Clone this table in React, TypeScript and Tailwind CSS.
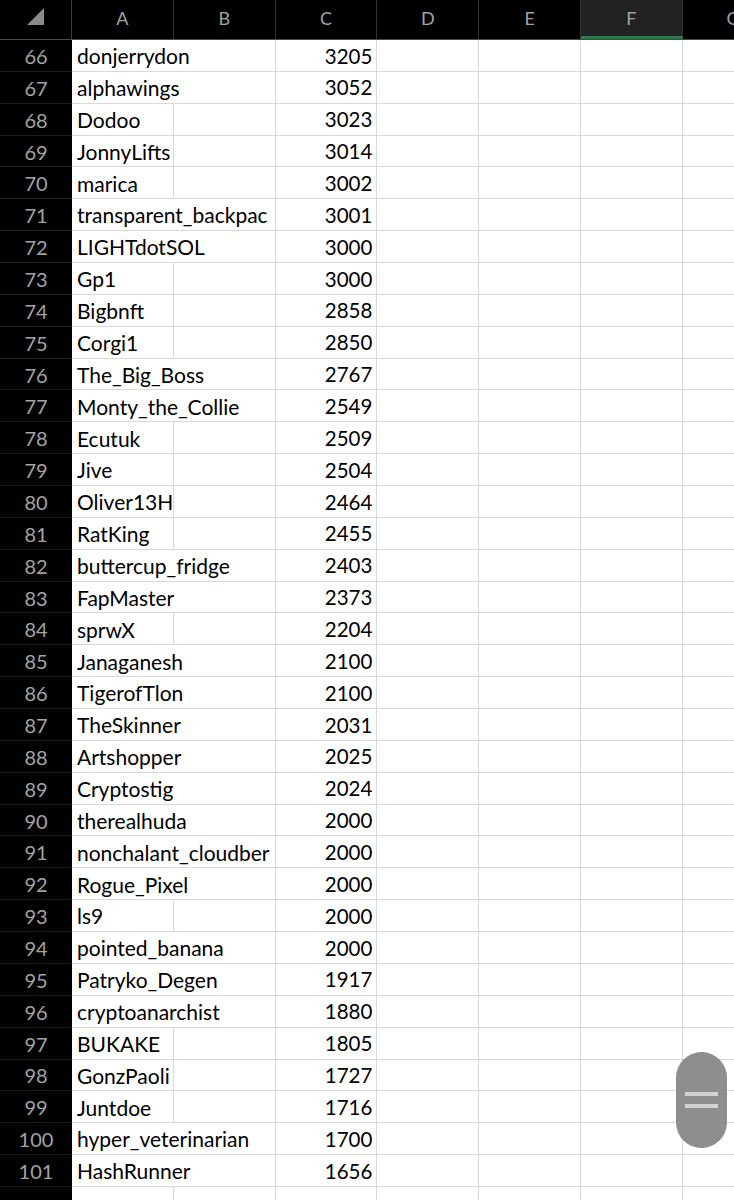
import React from "react";

type Row = { n: number; name: string; v: string; o: boolean };

const rows: Row[] = [
  { n: 66, name: "donjerrydon", v: "3205", o: true },
  { n: 67, name: "alphawings", v: "3052", o: true },
  { n: 68, name: "Dodoo", v: "3023", o: false },
  { n: 69, name: "JonnyLifts", v: "3014", o: false },
  { n: 70, name: "marica", v: "3002", o: false },
  { n: 71, name: "transparent_backpac", v: "3001", o: true },
  { n: 72, name: "LIGHTdotSOL", v: "3000", o: true },
  { n: 73, name: "Gp1", v: "3000", o: false },
  { n: 74, name: "Bigbnft", v: "2858", o: false },
  { n: 75, name: "Corgi1", v: "2850", o: false },
  { n: 76, name: "The_Big_Boss", v: "2767", o: true },
  { n: 77, name: "Monty_the_Collie", v: "2549", o: true },
  { n: 78, name: "Ecutuk", v: "2509", o: false },
  { n: 79, name: "Jive", v: "2504", o: false },
  { n: 80, name: "Oliver13H", v: "2464", o: false },
  { n: 81, name: "RatKing", v: "2455", o: false },
  { n: 82, name: "buttercup_fridge", v: "2403", o: true },
  { n: 83, name: "FapMaster", v: "2373", o: true },
  { n: 84, name: "sprwX", v: "2204", o: false },
  { n: 85, name: "Janaganesh", v: "2100", o: true },
  { n: 86, name: "TigerofTlon", v: "2100", o: true },
  { n: 87, name: "TheSkinner", v: "2031", o: true },
  { n: 88, name: "Artshopper", v: "2025", o: true },
  { n: 89, name: "Cryptostig", v: "2024", o: true },
  { n: 90, name: "therealhuda", v: "2000", o: true },
  { n: 91, name: "nonchalant_cloudber", v: "2000", o: true },
  { n: 92, name: "Rogue_Pixel", v: "2000", o: true },
  { n: 93, name: "ls9", v: "2000", o: false },
  { n: 94, name: "pointed_banana", v: "2000", o: true },
  { n: 95, name: "Patryko_Degen", v: "1917", o: true },
  { n: 96, name: "cryptoanarchist", v: "1880", o: true },
  { n: 97, name: "BUKAKE", v: "1805", o: false },
  { n: 98, name: "GonzPaoli", v: "1727", o: false },
  { n: 99, name: "Juntdoe", v: "1716", o: false },
  { n: 100, name: "hyper_veterinarian", v: "1700", o: true },
  { n: 101, name: "HashRunner", v: "1656", o: true },
];

const cols = ["A", "B", "C", "D", "E", "F", "G"];

function EmptyCell() {
  return <div className="w-[101.8px] shrink-0 h-full border-r border-b border-[#d9d9d9] bg-white" />;
}

function DataRow({ r }: { r?: Row }) {
  return (
    <div className="flex h-[31.86px] shrink-0">
      <div className="w-[72px] shrink-0 h-full bg-black border-b border-[#1c1c1c] flex items-center justify-center text-[20px] text-[#a3a3a3] pt-[1px]">
        {r ? r.n : ""}
      </div>
      <div className="w-[203.6px] shrink-0 h-full flex overflow-hidden border-r border-b border-[#d9d9d9] bg-white">
        <div
          className={
            "w-[101.8px] shrink-0 h-full flex items-center pl-[5px] pt-[1px] whitespace-nowrap text-[21px] text-black " +
            (r && r.o ? "" : "border-r border-[#d9d9d9]")
          }
        >
          {r ? r.name : ""}
        </div>
        <div className="w-[101.8px] shrink-0 h-full" />
      </div>
      <div className="w-[101.8px] shrink-0 h-full flex items-center justify-end pr-[4px] pt-[1px] text-[20.5px] text-black border-r border-b border-[#d9d9d9] bg-white">
        {r ? r.v : ""}
      </div>
      <EmptyCell />
      <EmptyCell />
      <EmptyCell />
      <EmptyCell />
    </div>
  );
}

export default function App() {
  return (
    <div className="relative w-[734px] h-[1200px] overflow-hidden bg-black font-['Lato',sans-serif]">
      <div className="flex flex-col w-[900px]">
        <div className="flex h-[40px] shrink-0 border-b border-[#4a4a4a] bg-black">
          <div className="w-[72px] shrink-0 h-full border-r border-[#3a3a3a] relative">
            <svg className="absolute left-[27px] top-[8px]" width="17" height="17" viewBox="0 0 17 17">
              <polygon points="17,0 17,17 0,17" fill="#8a8a8a" />
            </svg>
          </div>
          {cols.map((c) =>
            c === "F" ? (
              <div
                key={c}
                className="w-[101.8px] shrink-0 h-full bg-[#222222] border-b-[3px] border-[#2f7a4f] border-r border-r-[#333333] flex items-center justify-center text-[18px] text-[#a3a3a3] pt-[1px]"
              >
                {c}
              </div>
            ) : (
              <div
                key={c}
                className="w-[101.8px] shrink-0 h-full border-r border-[#333333] flex items-center justify-center text-[18px] text-[#a3a3a3] pb-[2px]"
              >
                {c}
              </div>
            )
          )}
        </div>
        {rows.map((r) => (
          <DataRow key={r.n} r={r} />
        ))}
        <DataRow />
      </div>
      <div className="absolute left-[676px] top-[1052px] w-[51px] h-[96px] rounded-full bg-[#8e8e8e] flex flex-col items-center justify-center gap-[8px]">
        <div className="w-[33px] h-[4px] bg-[#d2d2d2]" />
        <div className="w-[33px] h-[4px] bg-[#d2d2d2]" />
      </div>
    </div>
  );
}
